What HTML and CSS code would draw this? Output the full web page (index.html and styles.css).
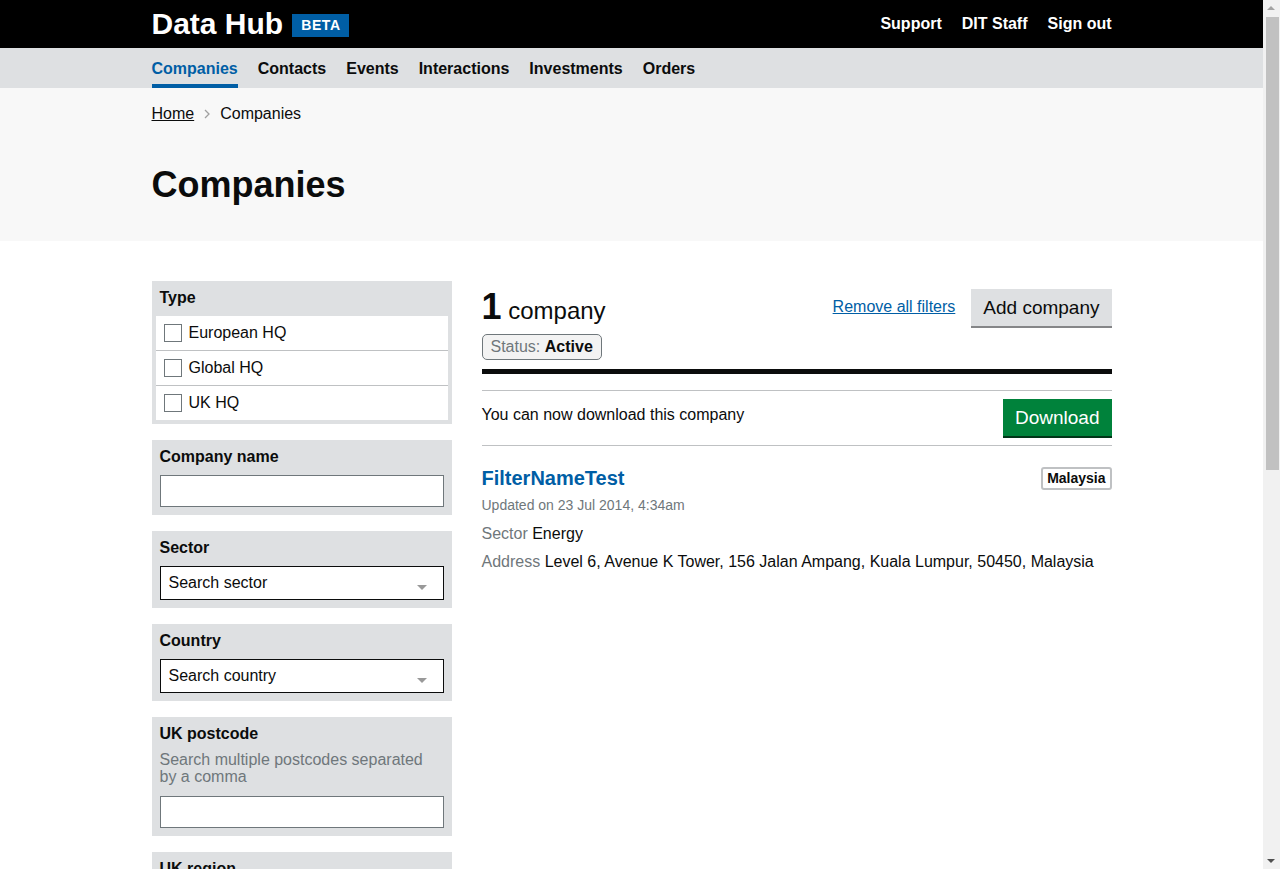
FILE: index.html
```html
<!DOCTYPE html>
<html lang="en">
<head>
<meta charset="utf-8">
<title>Companies - Data Hub</title>
<link rel="stylesheet" href="styles.css">
</head>
<body>
<header class="topbar">
  <div class="container topbar-inner">
    <div class="brand">
      <span class="brand-name">Data Hub</span>
      <span class="beta">BETA</span>
    </div>
    <nav class="user-links">
      <a href="#">Support</a>
      <a href="#">DIT Staff</a>
      <a href="#">Sign out</a>
    </nav>
  </div>
</header>
<nav class="mainnav">
  <div class="container mainnav-inner">
    <a href="#" class="active">Companies</a>
    <a href="#">Contacts</a>
    <a href="#">Events</a>
    <a href="#">Interactions</a>
    <a href="#">Investments</a>
    <a href="#">Orders</a>
  </div>
</nav>
<div class="pagehead">
  <div class="container">
    <div class="breadcrumb">
      <a href="#">Home</a>
      <svg class="chev" width="8" height="12" viewBox="0 0 8 12"><path d="M2 2 L6 6 L2 10" fill="none" stroke="#a0a0a0" stroke-width="1.3"/></svg>
      <span>Companies</span>
    </div>
    <h1>Companies</h1>
  </div>
</div>
<main class="container layout">
  <aside class="filters">
    <div class="fgroup fgroup-type">
      <div class="flabel">Type</div>
      <div class="options">
        <label class="opt"><span class="cb"></span>European HQ</label>
        <label class="opt"><span class="cb"></span>Global HQ</label>
        <label class="opt"><span class="cb"></span>UK HQ</label>
      </div>
    </div>
    <div class="fgroup">
      <div class="flabel">Company name</div>
      <div class="input"></div>
    </div>
    <div class="fgroup">
      <div class="flabel">Sector</div>
      <div class="select"><span>Search sector</span><span class="arrow"></span></div>
    </div>
    <div class="fgroup">
      <div class="flabel">Country</div>
      <div class="select"><span>Search country</span><span class="arrow"></span></div>
    </div>
    <div class="fgroup">
      <div class="flabel">UK postcode</div>
      <div class="hint">Search multiple postcodes separated by a comma</div>
      <div class="input"></div>
    </div>
    <div class="fgroup">
      <div class="flabel">UK region</div>
      <div class="select"><span>Search UK region</span><span class="arrow"></span></div>
    </div>
    <div class="fgroup">
      <div class="flabel">Currently exporting to</div>
      <div class="select"><span>Search country</span><span class="arrow"></span></div>
    </div>
  </aside>
  <section class="results">
    <div class="rhead">
      <div class="rhead-left">
        <h2 class="count"><span class="num">1</span> company</h2>
        <span class="tag">Status: <strong>Active</strong></span>
      </div>
      <div class="rhead-right">
        <a href="#" class="link">Remove all filters</a>
        <a href="#" class="btn btn-grey">Add company</a>
      </div>
    </div>
    <div class="download">
      <span>You can now download this company</span>
      <a href="#" class="btn btn-green">Download</a>
    </div>
    <article class="item">
      <div class="item-top">
        <a href="#" class="item-title">FilterNameTest</a>
        <span class="badge">Malaysia</span>
      </div>
      <div class="updated">Updated on 23 Jul 2014, 4:34am</div>
      <div class="meta"><span class="key">Sector</span> Energy</div>
      <div class="meta"><span class="key">Address</span> Level 6, Avenue K Tower, 156 Jalan Ampang, Kuala Lumpur, 50450, Malaysia</div>
    </article>
  </section>
</main>
<div class="scrollbar" aria-hidden="true">
  <span class="sb-up"></span>
  <span class="sb-thumb"></span>
  <span class="sb-down"></span>
</div>
</body>
</html>
```
FILE: styles.css
```css
* { box-sizing: border-box; }
html, body { margin: 0; padding: 0; }
html { overflow: hidden; }
body {
  font-family: "Liberation Sans", Arial, sans-serif;
  font-size: 16px;
  line-height: 20px;
  color: #0b0c0c;
  background: #fff;
  margin-right: 17px;
}
a { color: inherit; text-decoration: none; }
.container { width: 960px; margin: 0 auto; }

.topbar { background: #000; height: 48px; color: #fff; }
.topbar-inner { display: flex; justify-content: space-between; align-items: center; height: 48px; }
.brand { display: flex; align-items: center; gap: 9px; }
.brand-name { font-weight: 700; font-size: 30px; line-height: 34px; }
.beta {
  background: #005ea5; color: #fff; font-weight: 700; font-size: 14px;
  letter-spacing: 0.6px; line-height: 23px; padding: 0 8px 0 9px; margin-top: 2px;
}
.user-links { display: flex; gap: 20px; font-weight: 700; font-size: 16px; }
.user-links a { color: #fff; }

.mainnav { background: #dee0e2; height: 40px; }
.mainnav-inner { display: flex; gap: 20px; height: 40px; }
.mainnav a {
  font-weight: 700; display: block; line-height: 20px; padding-top: 11px; height: 40px;
  border-bottom: 4px solid transparent;
}
.mainnav a.active { color: #005ea5; border-bottom-color: #005ea5; }

.pagehead { background: #f8f8f8; padding: 16px 0 36px; }
.breadcrumb { display: flex; align-items: center; line-height: 20px; }
.breadcrumb a { text-decoration: underline; }
.chev { margin: 0 9px 0 9px; }
.pagehead h1 { margin: 41px 0 0; font-size: 36px; line-height: 40px; font-weight: 700; }

.layout { display: grid; grid-template-columns: 300px 630px; gap: 30px; padding-top: 40px; padding-bottom: 40px; }

.fgroup { background: #dee0e2; padding: 7px 8px 8px; margin-bottom: 16px; }
.flabel { font-weight: 700; line-height: 20px; margin-bottom: 8px; }
.fgroup-type { padding: 4px; }
.fgroup-type .flabel { padding: 3px 4px 0; margin-bottom: 8px; }
.options { display: flex; flex-direction: column; gap: 1px; background: #bfc1c3; }
.opt { display: flex; align-items: center; gap: 7px; background: #fff; height: 34px; padding-left: 8px; }
.cb { width: 18px; height: 18px; border: 1px solid #6f777b; background: #fff; }
.input { height: 32px; background: #fff; border: 1px solid #6f777b; }
.select {
  height: 34px; background: #fff; border: 1px solid #0b0c0c; display: flex; align-items: center;
  justify-content: space-between; padding: 0 16px 0 8px;
}
.arrow { width: 0; height: 0; border-left: 5px solid transparent; border-right: 5px solid transparent; border-top: 5px solid #999; margin-top: 8px; }
.hint { color: #6f777b; line-height: 17px; margin: -1px 0 11px; }

.rhead { display: flex; justify-content: space-between; align-items: flex-start; border-bottom: 5px solid #0b0c0c; padding-bottom: 9px; }
.rhead-left { display: flex; flex-direction: column; align-items: flex-start; }
.count { margin: 6px 0 3px; font-weight: 400; font-size: 24px; line-height: 40px; }
.count .num { font-weight: 700; font-size: 36px; }
.tag {
  display: inline-block; border: 1px solid #6f777b; border-radius: 5px; background: #f3f3f3;
  padding: 1px 8px 2px; line-height: 21px; color: #6f777b;
}
.tag strong { color: #0b0c0c; }
.rhead-right { display: flex; align-items: center; gap: 16px; margin-top: 8px; }
.link { color: #005ea5; text-decoration: underline; margin-top: -2px; }
.btn { display: inline-block; font-size: 19px; line-height: 37px; height: 37px; padding: 0 12px; }
.btn-grey { background: #dee0e2; box-shadow: 0 2px 0 #858688; color: #0b0c0c; }
.btn-green { background: #00823b; box-shadow: 0 2px 0 #003618; color: #fff; }

.download {
  margin-top: 16px; border-top: 1px solid #bfc1c3; border-bottom: 1px solid #bfc1c3;
  display: flex; justify-content: space-between; align-items: center; padding: 8px 0 9px;
}
.download span { margin-top: -5px; }

.item { padding-top: 20px; }
.item-top { display: flex; justify-content: space-between; align-items: center; }
.item-title { color: #005ea5; font-weight: 700; font-size: 20px; line-height: 24px; }
.badge { border: 2px solid #bfc1c3; border-radius: 3px; font-weight: 700; font-size: 14px; line-height: 15px; padding: 2px 4px; margin-top: 1px; }
.updated { color: #6f777b; font-size: 14px; line-height: 20px; margin-top: 5px; }
.meta { line-height: 24px; margin-top: 7px; }
.meta + .meta { margin-top: 4px; }
.key { color: #6f777b; }

.scrollbar {
  position: fixed; top: 0; right: 0; width: 17px; height: 100%;
  background: #f1f1f1; display: flex; flex-direction: column; align-items: center;
}
.sb-up, .sb-down { height: 17px; width: 17px; position: relative; }
.sb-up::after, .sb-down::after {
  content: ""; position: absolute; left: 4px; width: 0; height: 0;
  border-left: 4px solid transparent; border-right: 4px solid transparent;
}
.sb-up::after { top: 6px; border-bottom: 4px solid #a3a3a3; }
.sb-down::after { top: 7px; border-top: 4px solid #505050; }
.sb-thumb { width: 13px; height: 453px; background: #c1c1c1; margin-left: 1px; }
.sb-down { margin-top: auto; }
```
